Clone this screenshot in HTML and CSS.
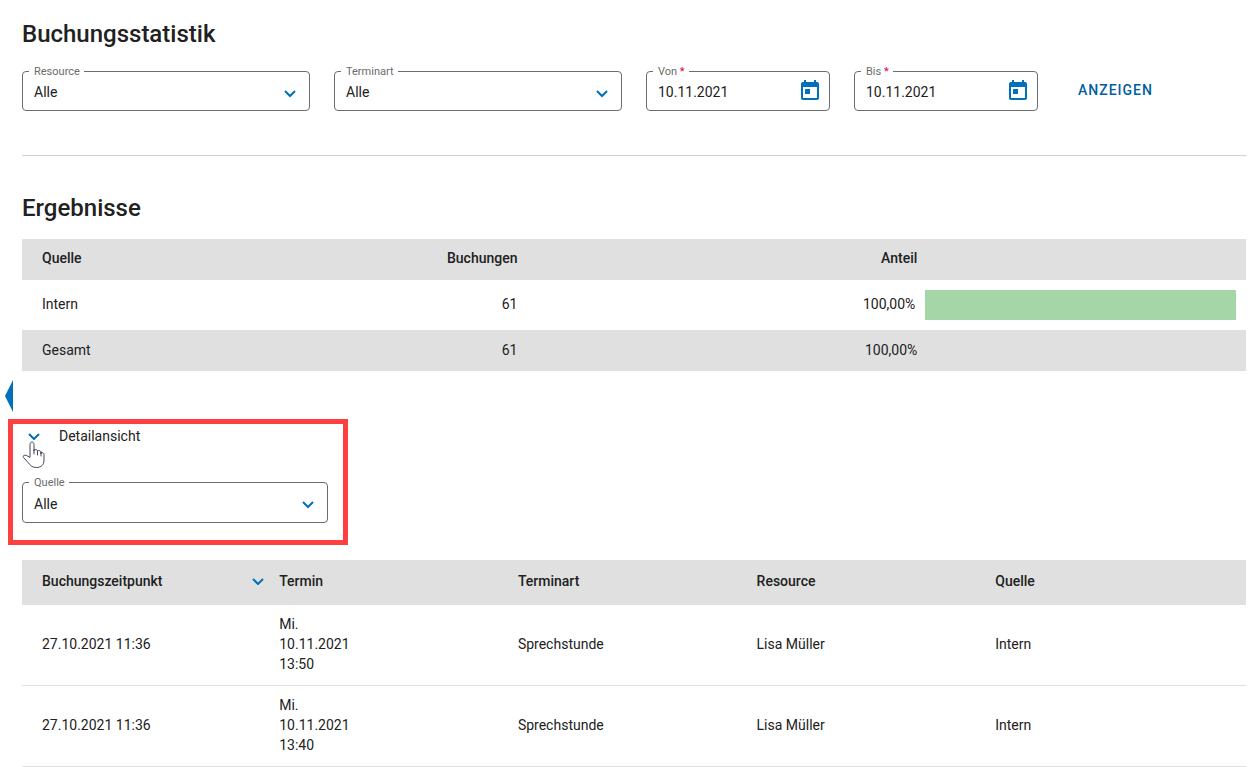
FILE: index.html
```html
<!DOCTYPE html>
<html lang="de">
<head>
    <meta charset="UTF-8">
    <meta name="viewport" content="width=device-width, initial-scale=1.0">
    <title>Buchungsstatistik</title>
    <link rel="stylesheet" href="styles.css">
</head>
<body>
    <button class="drawer-handle" type="button" aria-label="Menü öffnen"></button>

    <main>
        <h1>Buchungsstatistik</h1>

        <form class="filters">
            <div class="field">
                <label for="resource">Resource</label>
                <select id="resource"><option>Alle</option></select>
                <svg class="chevron" viewBox="0 0 12 8"><path d="M1 1l5 5 5-5"/></svg>
            </div>
            <div class="field">
                <label for="terminart">Terminart</label>
                <select id="terminart"><option>Alle</option></select>
                <svg class="chevron" viewBox="0 0 12 8"><path d="M1 1l5 5 5-5"/></svg>
            </div>
            <div class="field date">
                <label for="von">Von <span class="required">*</span></label>
                <input id="von" type="text" value="10.11.2021">
                <svg class="calendar" viewBox="0 0 24 24"><path d="M19 3h-1V1h-2v2H8V1H6v2H5c-1.11 0-1.99.9-1.99 2L3 19c0 1.1.89 2 2 2h14c1.1 0 2-.9 2-2V5c0-1.1-.9-2-2-2zm0 16H5V8h14v11zM7 10h5v5H7z"/></svg>
            </div>
            <div class="field date">
                <label for="bis">Bis <span class="required">*</span></label>
                <input id="bis" type="text" value="10.11.2021">
                <svg class="calendar" viewBox="0 0 24 24"><path d="M19 3h-1V1h-2v2H8V1H6v2H5c-1.11 0-1.99.9-1.99 2L3 19c0 1.1.89 2 2 2h14c1.1 0 2-.9 2-2V5c0-1.1-.9-2-2-2zm0 16H5V8h14v11zM7 10h5v5H7z"/></svg>
            </div>
            <button class="show-button" type="button">ANZEIGEN</button>
        </form>

        <hr>

        <h2>Ergebnisse</h2>

        <table class="summary">
            <colgroup>
                <col class="col-source">
                <col class="col-count">
                <col class="col-share">
                <col>
            </colgroup>
            <thead>
                <tr>
                    <th>Quelle</th>
                    <th class="number">Buchungen</th>
                    <th class="share">Anteil</th>
                    <td></td>
                </tr>
            </thead>
            <tbody>
                <tr>
                    <td>Intern</td>
                    <td class="number">61</td>
                    <td class="number">100,00%</td>
                    <td class="bar-cell"><div class="bar" style="width: 100%"></div></td>
                </tr>
            </tbody>
            <tfoot>
                <tr>
                    <td>Gesamt</td>
                    <td class="number">61</td>
                    <td class="share">100,00%</td>
                    <td></td>
                </tr>
            </tfoot>
        </table>

        <section class="highlight">
            <button class="toggle" type="button">
                <svg class="chevron" viewBox="0 0 12 8"><path d="M1 2l5 5 5-5"/></svg>
                Detailansicht
            </button>
            <svg class="hand" viewBox="0 0 24 28">
                <path d="M8 17V4.500C8 2.800 9 2 10 2s2 .8 2 2.500V11v-1c1.500-1 3.500-.5 3.500 1.500v1.500-2c1.500-1 3.500-.3 3.500 1.500v1.500-1c1.500-1 3 0 3 1.500V20c0 5-3 7.500-7.500 7.500-4.500 0-6-2-8.500-5L1.500 17.500c-1-1.500.5-3 2.500-2.200z"/>
                <path d="M12 10v4M15.500 11v4M19 12v4"/>
            </svg>
            <div class="field">
                <label for="quelle">Quelle</label>
                <select id="quelle"><option>Alle</option></select>
                <svg class="chevron" viewBox="0 0 12 8"><path d="M1 1l5 5 5-5"/></svg>
            </div>
        </section>

        <table class="details">
            <colgroup>
                <col class="col-booked">
                <col class="col-detail">
                <col class="col-detail">
                <col class="col-detail">
                <col>
            </colgroup>
            <thead>
                <tr>
                    <th>
                        <button class="sort" type="button">
                            Buchungszeitpunkt
                            <svg class="chevron" viewBox="0 0 12 8"><path d="M1 2l5 5 5-5"/></svg>
                        </button>
                    </th>
                    <th>Termin</th>
                    <th>Terminart</th>
                    <th>Resource</th>
                    <th>Quelle</th>
                </tr>
            </thead>
            <tbody>
                <tr>
                    <td>27.10.2021 11:36</td>
                    <td>Mi.<br>10.11.2021<br>13:50</td>
                    <td>Sprechstunde</td>
                    <td>Lisa Müller</td>
                    <td>Intern</td>
                </tr>
                <tr>
                    <td>27.10.2021 11:36</td>
                    <td>Mi.<br>10.11.2021<br>13:40</td>
                    <td>Sprechstunde</td>
                    <td>Lisa Müller</td>
                    <td>Intern</td>
                </tr>
            </tbody>
        </table>
    </main>
</body>
</html>
```

FILE: styles.css
```css
* {
    box-sizing: border-box;
}

body {
    margin: 0;
    background: #fff;
    color: #212121;
    font-family: Roboto, sans-serif;
    font-size: 14px;
    line-height: 20px;
}

main {
    padding: 17px 13px 0 22px;
}

button, input, select {
    font: inherit;
    color: inherit;
    background: none;
    border: none;
    margin: 0;
    padding: 0;
}

button {
    cursor: pointer;
}

h1, h2 {
    font-size: 24px;
    font-weight: 500;
    line-height: 34px;
}

h1 {
    margin: 0 0 20px;
}

h2 {
    margin: 35px 0 14px;
}

hr {
    border: none;
    border-top: 1px solid #d0d0d0;
    margin: 44px 0 0;
}

/* Form fields with the label sitting on the outline */
.filters {
    display: flex;
    gap: 24px;
}

.field {
    position: relative;
    width: 288px;
    height: 40px;
}

.field.date {
    width: 184px;
}

.field label {
    position: absolute;
    top: -7px;
    left: 7px;
    padding: 0 4px 0 5px;
    background: #fff;
    color: #6b6b6b;
    font-size: 11px;
    line-height: 16px;
}

.required {
    color: #e4003a;
}

.field select,
.field input {
    appearance: none;
    width: 100%;
    height: 100%;
    padding: 2px 11px 0;
    border: 1px solid #6b6b6b;
    border-radius: 4px;
}

.chevron {
    width: 12px;
    height: 8px;
    fill: none;
    stroke: #0070bb;
    stroke-width: 2;
}

.field .chevron {
    position: absolute;
    top: 19px;
    right: 14px;
    pointer-events: none;
}

.calendar {
    position: absolute;
    top: 8px;
    right: 8px;
    width: 24px;
    height: 24px;
    fill: #0070bb;
}

.show-button {
    height: 38px;
    padding: 0 16px;
    color: #005fa3;
    font-weight: 500;
    letter-spacing: 1px;
}

/* Tables */
table {
    width: 100%;
    table-layout: fixed;
    border-collapse: collapse;
}

th {
    font-weight: 500;
    text-align: left;
}

th, td {
    padding: 10px;
}

th:first-child,
td:first-child {
    padding-left: 20px;
}

thead, tfoot {
    background: #e0e0e0;
}

.summary th,
.summary td {
    padding-top: 9px;
    padding-bottom: 12px;
}

.summary tfoot td {
    padding-top: 10px;
    padding-bottom: 11px;
}

.summary .number,
.summary .share {
    text-align: right;
}

.summary .share {
    padding-right: 8px;
}

.summary .bar-cell {
    padding: 10px 10px 10px 0;
}

.bar {
    height: 30px;
    background: #a5d6a7;
}

.col-source {
    width: 20%;
}

.col-count {
    width: 21.3%;
}

.col-share {
    width: 32.5%;
}

/* Detail view */
.highlight {
    position: relative;
    width: 340px;
    margin: 48px 0 15px -14px;
    padding: 2px 15px 17px 9px;
    border: 5px solid #ff4040;
}

.highlight .field {
    width: auto;
    height: 41px;
    margin-top: 36px;
}

.toggle {
    display: flex;
    align-items: center;
    gap: 19px;
    padding-left: 6px;
}

.hand {
    position: absolute;
    top: 16px;
    left: 9px;
    width: 24px;
    height: 28px;
    fill: #fff;
    stroke: #45455a;
    stroke-linecap: round;
    stroke-linejoin: round;
}

.details th {
    padding: 11px 10px 14px;
}

.details th:first-child {
    padding: 11px 5px 14px 20px;
}

.details td {
    padding-top: 9px;
    padding-bottom: 11px;
}

.details tbody tr {
    border-bottom: 1px solid #e0e0e0;
}

.sort {
    display: flex;
    align-items: center;
    justify-content: space-between;
    width: 100%;
}

.col-booked {
    width: 20.2%;
}

.col-detail {
    width: 19.5%;
}

/* Handle of the collapsed side menu */
.drawer-handle {
    position: absolute;
    top: 380px;
    left: 5px;
    width: 8px;
    height: 32px;
    background: #0070bb;
    clip-path: polygon(100% 0, 100% 100%, 0 50%);
}
```
